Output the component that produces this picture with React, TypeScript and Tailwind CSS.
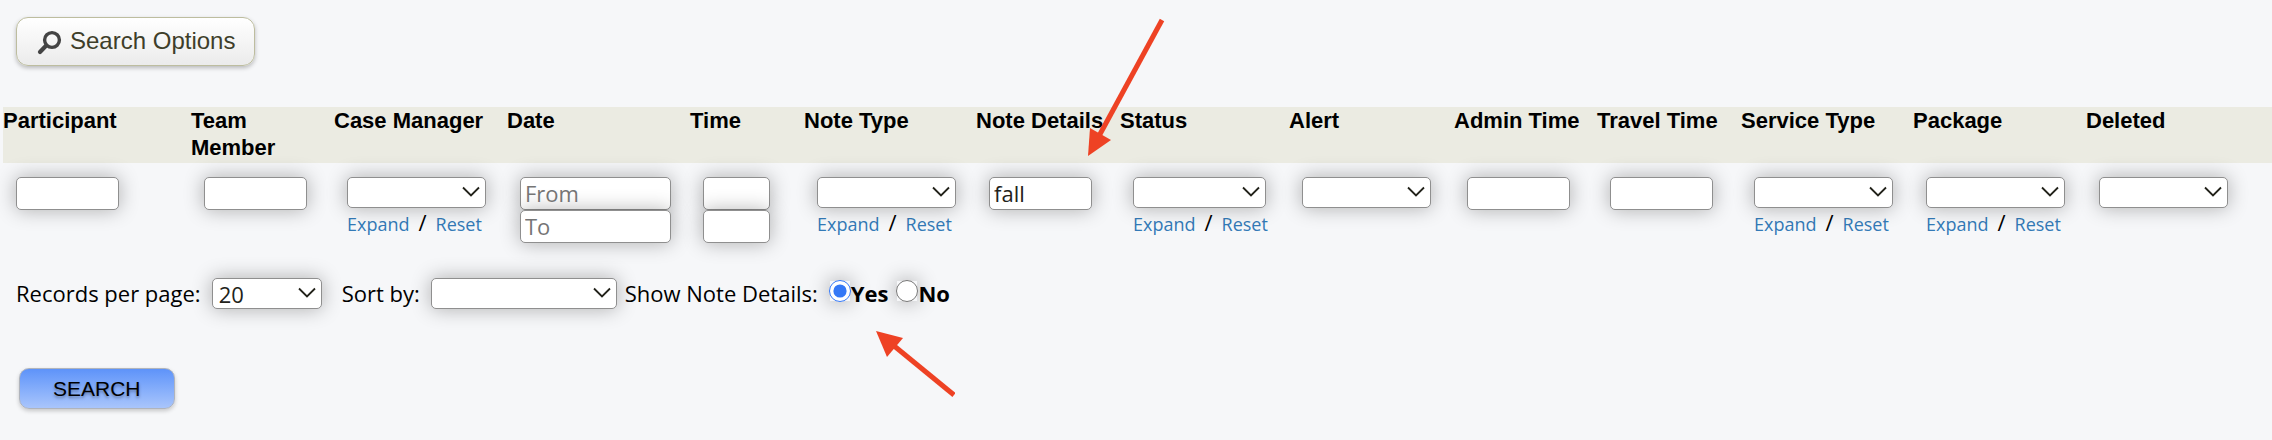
import React, { useState } from 'react';

interface FilterColumn {
  id: string;
  label: string;
  kind: 'text' | 'select' | 'range';
  colWidth: string;
  controlWidth: string;
  expandable?: boolean;
  placeholders?: string[];
}

const columns: FilterColumn[] = [
  { id: 'participant', label: 'Participant', kind: 'text', colWidth: 'w-[188px]', controlWidth: 'w-[103px]' },
  { id: 'team-member', label: 'Team Member', kind: 'text', colWidth: 'w-[143px]', controlWidth: 'w-[103px]' },
  { id: 'case-manager', label: 'Case Manager', kind: 'select', colWidth: 'w-[173px]', controlWidth: 'w-[139px]', expandable: true },
  { id: 'date', label: 'Date', kind: 'range', colWidth: 'w-[183px]', controlWidth: 'w-[151px]', placeholders: ['From', 'To'] },
  { id: 'time', label: 'Time', kind: 'range', colWidth: 'w-[114px]', controlWidth: 'w-[67px]' },
  { id: 'note-type', label: 'Note Type', kind: 'select', colWidth: 'w-[172px]', controlWidth: 'w-[139px]', expandable: true },
  { id: 'note-details', label: 'Note Details', kind: 'text', colWidth: 'w-[144px]', controlWidth: 'w-[103px]' },
  { id: 'status', label: 'Status', kind: 'select', colWidth: 'w-[169px]', controlWidth: 'w-[133px]', expandable: true },
  { id: 'alert', label: 'Alert', kind: 'select', colWidth: 'w-[165px]', controlWidth: 'w-[129px]' },
  { id: 'admin-time', label: 'Admin Time', kind: 'text', colWidth: 'w-[143px]', controlWidth: 'w-[103px]' },
  { id: 'travel-time', label: 'Travel Time', kind: 'text', colWidth: 'w-[144px]', controlWidth: 'w-[103px]' },
  { id: 'service-type', label: 'Service Type', kind: 'select', colWidth: 'w-[172px]', controlWidth: 'w-[139px]', expandable: true },
  { id: 'package', label: 'Package', kind: 'select', colWidth: 'w-[173px]', controlWidth: 'w-[139px]', expandable: true },
  { id: 'deleted', label: 'Deleted', kind: 'select', colWidth: 'w-[186px]', controlWidth: 'w-[129px]' }
];

const fieldClass =
  'block rounded-[5px] border border-[#8f8f8f] bg-white text-[22px] text-[#22221a] shadow-[0_0_20px_rgba(0,0,0,0.3)] placeholder:text-[#757575]';

interface SelectBoxProps {
  id: string;
  label?: string;
  width: string;
  options: string[];
}

const SelectBox: React.FC<SelectBoxProps> = ({ id, label, width, options }) => (
  <div className={`relative ${width}`}>
    <select id={id} aria-label={label} className={`${fieldClass} h-[31px] w-full appearance-none pl-1.5 leading-7`}>
      {options.map(option => (
        <option key={option} value={option}>{option}</option>
      ))}
    </select>
    <svg viewBox="0 0 18 11" className="pointer-events-none absolute top-[9px] right-[6px] h-[11px] w-[18px]" aria-hidden="true">
      <path d="M1 1.5 L9 9.5 L17 1.5" fill="none" stroke="#22221a" strokeWidth="1.8" />
    </svg>
  </div>
);

const App: React.FC = () => {
  const [noteDetails, setNoteDetails] = useState('fall');
  const [showDetails, setShowDetails] = useState(true);

  const renderControl = (column: FilterColumn) => {
    if (column.kind === 'select') {
      return (
        <>
          <SelectBox id={column.id} label={column.label} width={column.controlWidth} options={['']} />
          {column.expandable && (
            <div className="text-[22px] leading-7 whitespace-nowrap">
              <a href="#expand" className="text-lg leading-7 text-[#337ab7]">Expand</a>
              <span className="px-[9px]">/</span>
              <a href="#reset" className="text-lg leading-7 text-[#337ab7]">Reset</a>
            </div>
          )}
        </>
      );
    }

    if (column.kind === 'range') {
      return ['From', 'To'].map((bound, index) => (
        <input
          key={bound}
          type="text"
          aria-label={`${column.label} ${bound}`}
          placeholder={column.placeholders?.[index]}
          className={`${fieldClass} ${column.controlWidth} h-[33px] px-1`}
        />
      ));
    }

    if (column.id === 'note-details') {
      return (
        <input
          type="text"
          aria-label={column.label}
          value={noteDetails}
          onChange={(e) => setNoteDetails(e.target.value)}
          className={`${fieldClass} ${column.controlWidth} h-[33px] px-1`}
        />
      );
    }

    return (
      <input type="text" aria-label={column.label} className={`${fieldClass} ${column.controlWidth} h-[33px] px-1`} />
    );
  };

  return (
    <div className="relative min-h-screen bg-[#f6f7f9] pt-[17px] pb-7 font-['Trebuchet_MS','Open_Sans',sans-serif] text-[22px] text-black">
      <button
        type="button"
        className="ml-4 flex h-[49px] items-center gap-2 rounded-xl border border-[#bdbd9f] bg-linear-to-b from-white to-[#ebebeb] pr-[19px] pb-0.5 pl-[19px] font-['Liberation_Sans',sans-serif] text-2xl text-[#3e3e2a] shadow-[0_2px_4px_rgba(0,0,0,0.25)]"
      >
        <svg viewBox="0 0 26 26" className="mt-1 h-[26px] w-[26px]" aria-hidden="true">
          <circle cx="16" cy="10" r="7.4" fill="none" stroke="#444" strokeWidth="3.4" />
          <path d="M10 15.8 L4 22" stroke="#444" strokeWidth="4.2" strokeLinecap="round" />
        </svg>
        Search Options
      </button>

      {/* Filters */}
      <table className="mt-[41px] ml-[3px] w-[calc(100%-3px)] table-fixed border-collapse">
        <thead>
          <tr className="bg-[#ebebe2]">
            {columns.map(column => (
              <th
                key={column.id}
                scope="col"
                className={`${column.colWidth} pb-0.5 text-left align-top font-['Liberation_Sans',sans-serif] text-[22px] leading-[27px] font-bold`}
              >
                {column.label}
              </th>
            ))}
          </tr>
        </thead>
        <tbody>
          <tr>
            {columns.map(column => (
              <td key={column.id} className="pt-3.5 pl-[13px] align-top">
                {renderControl(column)}
              </td>
            ))}
          </tr>
        </tbody>
      </table>

      {/* Display options */}
      <div className="mt-[35px] ml-4 flex items-center leading-[31px]">
        <label htmlFor="records-per-page" className="mr-[11px]">Records per page:</label>
        <SelectBox id="records-per-page" width="w-[110px]" options={['20', '50', '100']} />
        <label htmlFor="sort-by" className="mr-[11px] ml-5">Sort by:</label>
        <SelectBox id="sort-by" width="w-[186px]" options={['']} />
        <fieldset className="ml-2 flex items-center">
          <legend className="float-left mr-[11px]">Show Note Details:</legend>
          {[true, false].map(value => (
            <label key={String(value)} className="mr-2 flex items-center font-bold">
              <input
                type="radio"
                name="show-note-details"
                checked={showDetails === value}
                onChange={() => setShowDetails(value)}
                className="mb-1.5 h-[22px] w-[22px] bg-[#f0f0f0] accent-[#3478f6] shadow-[0_0_20px_rgba(0,0,0,0.3)]"
              />
              {value ? 'Yes' : 'No'}
            </label>
          ))}
        </fieldset>
      </div>

      <button
        type="submit"
        className="mt-[59px] ml-[19px] block h-[41px] rounded-[10px] border border-[#b0b4bc] bg-linear-to-b from-[#5e93f9] to-[#a9c5fb] px-[33px] font-['Liberation_Sans',sans-serif] text-[21px] shadow-[0_2px_4px_rgba(0,0,0,0.2)] text-shadow-[0_2px_3px_rgba(0,0,0,0.35)]"
      >
        SEARCH
      </button>

      {/* Callout arrows */}
      <svg viewBox="0 0 80 140" className="pointer-events-none absolute top-[18px] left-[1087px] h-[140px] w-20" aria-hidden="true">
        <path d="M75 2 L12 118" stroke="#ee4224" strokeWidth="5" />
        <path d="M1 138 L3 110 L24 122 Z" fill="#ee4224" />
      </svg>
      <svg viewBox="0 0 80 68" className="pointer-events-none absolute top-[330px] left-[875px] h-[68px] w-20" aria-hidden="true">
        <path d="M79 65 L18 15" stroke="#ee4224" strokeWidth="5" />
        <path d="M1 1 L28 8 L12 27 Z" fill="#ee4224" />
      </svg>
    </div>
  );
};

export default App;
